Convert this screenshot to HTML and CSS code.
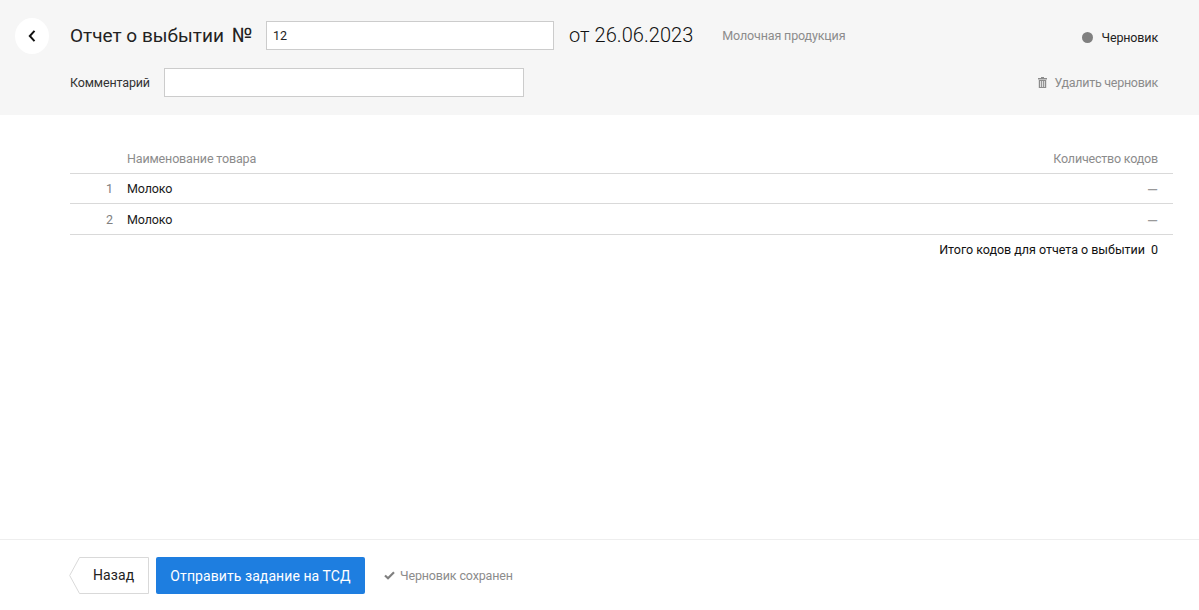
FILE: index.html
```html
<!DOCTYPE html>
<html lang="ru">
<head>
<meta charset="utf-8">
<title>Отчет о выбытии</title>
<link rel="stylesheet" href="styles.css">
</head>
<body>
<div class="page">
  <header class="head">
    <a class="back-circle" href="#">
      <svg width="8" height="12" viewBox="0 0 8 12"><path d="M6.5 .8 L1.8 6 L6.5 11.2" fill="none" stroke="#111" stroke-width="2"/></svg>
    </a>
    <div class="head-main">
      <div class="row-top">
        <h1 class="title">Отчет о выбытии<span class="title-no">№</span></h1>
        <input class="field field-num" type="text" value="12">
        <span class="date">от 26.06.2023</span>
        <span class="group">Молочная продукция</span>
        <span class="status"><i class="dot"></i>Черновик</span>
      </div>
      <div class="row-bottom">
        <label class="comment-label">Комментарий</label>
        <input class="field field-comment" type="text">
        <a class="delete" href="#">
          <svg width="9" height="11" viewBox="0 0 9 11"><path fill="#8c8c8c" d="M3 0h3v1h3v1.4H0V1h3zM.8 3h7.4v8H.8zM2.2 4v6h.9V4zm2 0v6h.9V4zm2 0v6h.7V4z"/></svg>
          Удалить черновик
        </a>
      </div>
    </div>
  </header>

  <main class="content">
    <div class="tr th">
      <span class="num"></span>
      <span class="name">Наименование товара</span>
      <span class="qty">Количество кодов</span>
    </div>
    <div class="tr">
      <span class="num">1</span>
      <span class="name">Молоко</span>
      <span class="qty dash">—</span>
    </div>
    <div class="tr">
      <span class="num">2</span>
      <span class="name">Молоко</span>
      <span class="qty dash">—</span>
    </div>
    <div class="total"><span>Итого кодов для отчета о выбытии</span><span>0</span></div>
  </main>

  <footer class="foot">
    <a class="btn-back" href="#">
      <svg class="btn-back-shape" width="80" height="37" viewBox="0 0 80 37"><path d="M79.5 .5H10.5L.7 18.5 10.5 36.5H79.5z" fill="#fff" stroke="#d9d9d9"/></svg>
      <span class="btn-back-text">Назад</span>
    </a>
    <a class="btn-send" href="#">Отправить задание на ТСД</a>
    <span class="saved">
      <svg width="11" height="9" viewBox="0 0 11 9"><path d="M1 4.5 L4 7.2 L10 1.2" fill="none" stroke="#808080" stroke-width="2.2"/></svg>
      Черновик сохранен
    </span>
  </footer>
</div>
</body>
</html>
```

FILE: styles.css
```css
* { box-sizing: border-box; }
html, body { margin: 0; height: 100%; }
body {
  font-family: Roboto, "Liberation Sans", sans-serif;
  font-size: 12.5px;
  letter-spacing: -0.15px;
  color: #1a1a1a;
  background: #fff;
}
a { text-decoration: none; color: inherit; }
.page { display: flex; flex-direction: column; height: 610px; overflow: hidden; }

.head {
  height: 115px;
  background: #f6f6f6;
  display: flex;
  padding: 18px 41px 0 15px;
  flex: none;
}
.back-circle {
  width: 34px;
  height: 36px;
  border-radius: 50%;
  background: #fff;
  display: flex;
  align-items: center;
  justify-content: center;
  flex: none;
}
.head-main { flex: 1; margin-left: 21px; display: flex; flex-direction: column; }
.row-top { display: flex; align-items: center; height: 36px; }
.title { margin: 0 0 2px; font-size: 19px; font-weight: 400; letter-spacing: 0; color: #222; width: 196px; white-space: nowrap; }
.title-no { margin-left: 8px; font-size: 20px; }
.field {
  height: 29px;
  border: 1px solid #ccc;
  background: #fff;
  font: inherit;
  letter-spacing: inherit;
  color: #222;
  padding: 0 6px;
  outline: none;
}
.field-num { width: 288px; margin-top: -1px; }
.date { font-size: 20px; font-weight: 300; letter-spacing: 0.05px; margin: 0 0 2px 15px; color: #111; }
.group { margin: 0 0 2px 29px; color: #8c8c8c; }
.status { margin: 2px 0 0 auto; display: flex; align-items: center; color: #222; }
.dot { width: 11px; height: 11px; border-radius: 50%; background: #808080; margin-right: 9px; }
.row-bottom { display: flex; align-items: center; margin-top: 14px; height: 29px; }
.comment-label { width: 94px; color: #333; }
.field-comment { width: 360px; }
.delete { margin-left: auto; display: flex; align-items: center; gap: 7px; color: #8c8c8c; letter-spacing: -0.27px; }

.content { flex: 1; padding: 28px 26px 0 70px; }
.tr {
  display: flex;
  align-items: center;
  height: 31px;
  border-bottom: 1px solid #d9d9d9;
}
.th + .tr { height: 30px; }
.th { color: #8c8c8c; }
.num { width: 43px; text-align: right; color: #808080; flex: none; }
.name { margin-left: 14px; flex: 1; }
.qty { padding-right: 15px; color: #8c8c8c; letter-spacing: -0.2px; }
.dash { font-size: 14px; letter-spacing: 0; color: #999; padding-top: 3px; }
.total { display: flex; justify-content: flex-end; gap: 6px; padding: 7px 15px 0 0; color: #111; letter-spacing: -0.02px; }

.foot {
  flex: none;
  height: 71px;
  border-top: 1px solid #eee;
  padding: 17px 0 0 69px;
  display: flex;
  align-items: flex-start;
}
.btn-back { position: relative; width: 80px; height: 37px; display: block; font-size: 14px; letter-spacing: 0.1px; color: #222; }
.btn-back-shape { display: block; }
.btn-back-text { position: absolute; left: 24px; top: 0; line-height: 37px; }
.btn-send {
  margin-left: 7px;
  height: 37px;
  width: 209px;
  background: #1e7ee0;
  border-radius: 2px;
  color: #fff;
  font-size: 14px;
  letter-spacing: 0.08px;
  display: flex;
  align-items: center;
  justify-content: center;
}
.saved { margin-left: 19px; height: 37px; display: flex; align-items: center; gap: 5px; color: #8c8c8c; }
```
